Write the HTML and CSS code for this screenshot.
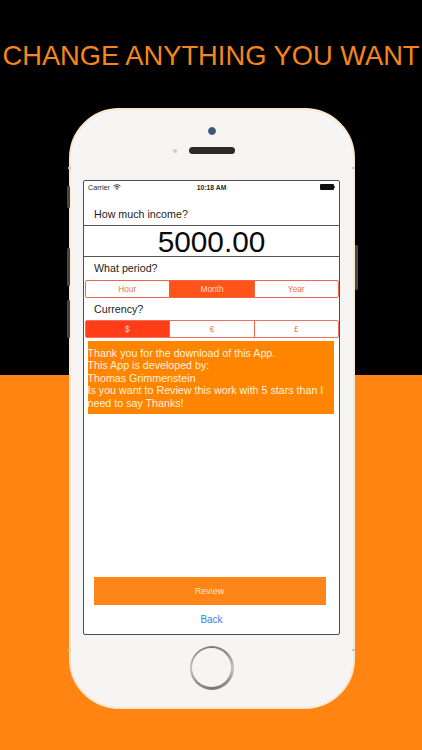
FILE: index.html
```html
<!DOCTYPE html>
<html lang="en">
<head>
<meta charset="utf-8">
<title>Change anything you want</title>
<link rel="stylesheet" href="styles.css">
</head>
<body>
<main class="page">
  <h1 class="headline">CHANGE ANYTHING YOU WANT</h1>
  <div class="phone">
    <span class="side side-mute"></span>
    <span class="side side-up"></span>
    <span class="side side-down"></span>
    <span class="side side-power"></span>
    <span class="band band-tl"></span>
    <span class="band band-tr"></span>
    <span class="band band-bl"></span>
    <span class="band band-br"></span>
    <div class="phone-top">
      <span class="camera"></span>
      <span class="speaker"><span class="sensor"></span></span>
    </div>
    <section class="screen">
      <div class="status">
        <div class="status-left">
          <span>Carrier</span>
          <svg class="wifi" viewBox="0 0 12 9" width="8" height="6" aria-hidden="true">
            <path d="M.8 3.2a7.4 7.4 0 0 1 10.4 0M2.5 5a5 5 0 0 1 7 0M4.2 6.7a2.6 2.6 0 0 1 3.6 0" fill="none" stroke="#222" stroke-width="1.3"/>
            <path d="M6 9 4.9 7.8a1.6 1.6 0 0 1 2.2 0z" fill="#222"/>
          </svg>
        </div>
        <span class="time">10:18 AM</span>
        <div class="status-right"><span class="battery"></span><span class="battery-tip"></span></div>
      </div>
      <div class="q q-first">How much income?</div>
      <div class="amount">5000.00</div>
      <div class="q q-period">What period?</div>
      <div class="seg seg-period">
        <span class="seg-item">Hour</span>
        <span class="seg-item seg-on">Month</span>
        <span class="seg-item">Year</span>
      </div>
      <div class="q q-currency">Currency?</div>
      <div class="seg seg-currency">
        <span class="seg-item seg-on">$</span>
        <span class="seg-item">€</span>
        <span class="seg-item">£</span>
      </div>
      <div class="thanks">Thank you for the download of this App.<br>This App is developed by:<br>Thomas Grimmenstein<br>Is you want to Review this work with 5 stars than I need to say Thanks!</div>
      <div class="review">Review</div>
      <div class="back">Back</div>
    </section>
    <div class="phone-bottom"><span class="home"></span></div>
  </div>
</main>
</body>
</html>
```

FILE: styles.css
```css
* { box-sizing: border-box; }
html, body { margin: 0; padding: 0; }
body { font-family: "Liberation Sans", Arial, sans-serif; }
.page {
  width: 422px;
  height: 750px;
  overflow: hidden;
  padding-top: 40px;
  background: linear-gradient(#000 0 375px, #ff8411 375px);
}
.headline {
  margin: 0;
  height: 34px;
  font-size: 27.3px;
  line-height: 32px;
  font-weight: 400;
  color: #f5851c;
  text-align: center;
  white-space: nowrap;
}
.phone {
  position: relative;
  width: 286px;
  height: 601px;
  margin: 34px 0 0 68.5px;
  padding: 0 12.5px;
  background: #f6f5f3;
  border: 2.5px solid #fbe6cf;
  border-radius: 50px;
}
.side { position: absolute; background: #4a4644; border-radius: 1px; width: 3px; }
.side-mute { left: -4px; top: 76px; height: 22px; }
.side-up { left: -4px; top: 138px; height: 38px; }
.side-down { left: -4px; top: 190px; height: 38px; }
.side-power { right: -5px; top: 135px; height: 45px; }
.band { position: absolute; width: 3px; height: 2px; background: #c9c5c0; }
.band-tl { left: -2.5px; top: 57px; }
.band-tr { right: -2.5px; top: 57px; }
.band-bl { left: -2.5px; top: 539px; }
.band-br { right: -2.5px; top: 539px; }
.phone-top {
  height: 69.5px;
  display: flex;
  flex-direction: column;
  align-items: center;
  padding-top: 17px;
}
.camera {
  width: 8px;
  height: 8px;
  border-radius: 50%;
  background: #2f5a82;
  border: 1.5px solid #5b6470;
}
.speaker {
  position: relative;
  width: 46px;
  height: 7px;
  margin-top: 12px;
  border-radius: 4px;
  background: #2a2a2a;
}
.sensor {
  position: absolute;
  left: -16px;
  top: 1.5px;
  width: 4px;
  height: 4px;
  border-radius: 50%;
  background: #cfcdca;
}
.screen {
  width: 257px;
  height: 455px;
  display: flex;
  flex-direction: column;
  background: #fff;
  border: 1.5px solid #4f4f4f;
  border-radius: 2px;
  color: #1c1c1c;
}
.status {
  height: 13px;
  flex: none;
  display: grid;
  grid-template-columns: 1fr auto 1fr;
  align-items: center;
  padding: 0 4px;
  font-size: 7.2px;
  color: #2a2a2a;
}
.status-left { display: flex; align-items: center; gap: 3px; }
.time { font-weight: 700; font-size: 6.8px; }
.status-right { display: flex; align-items: center; justify-content: flex-end; }
.battery { width: 14px; height: 5.5px; background: #111; border-radius: 1px; }
.battery-tip { width: 1px; height: 2.5px; background: #555; }
.q {
  flex: none;
  padding-left: 10px;
  font-size: 10.7px;
  line-height: 14px;
}
.q-first { height: 31px; padding-top: 13px; }
.amount {
  flex: none;
  height: 32px;
  margin: 0 -0.5px;
  border-top: 1px solid #555;
  border-bottom: 1px solid #555;
  text-align: center;
  font-size: 29.8px;
  line-height: 31px;
  color: #0a0a0a;
}
.q-period { height: 23px; padding-top: 4.5px; }
.seg {
  flex: none;
  display: grid;
  grid-template-columns: 83.5px 85px 1fr;
  height: 18px;
  margin: 0 0.5px;
  border: 1px solid #f0654a;
  border-radius: 2px;
  font-size: 8.3px;
  color: #f4704c;
}
.seg-item {
  display: flex;
  align-items: center;
  justify-content: center;
  border-left: 1px solid #f0654a;
}
.seg-item:first-child { border-left: 0; }
.seg-period .seg-on { background: #ff5419; border-color: #ff5419; color: #ffd9c8; }
.seg-currency { border-color: #ec7160; }
.seg-currency .seg-on { background: #ff3d17; color: #ffd9c8; }
.q-currency { height: 22px; padding-top: 4.5px; }
.thanks {
  flex: none;
  width: 246px;
  height: 73px;
  margin: 3.5px 0 0 3.5px;
  padding-top: 5.5px;
  background: #ff8500;
  color: #fdf0df;
  font-size: 10.7px;
  line-height: 12.5px;
}
.review {
  flex: none;
  width: 232px;
  height: 28px;
  margin: auto 0 0 9.5px;
  background: #ff8519;
  color: #fde3c8;
  font-size: 9px;
  display: flex;
  align-items: center;
  justify-content: center;
}
.back {
  flex: none;
  height: 29px;
  display: flex;
  align-items: center;
  justify-content: center;
  color: #3584e2;
  font-size: 10px;
}
.phone-bottom {
  display: flex;
  justify-content: center;
  padding-top: 11px;
}
.home {
  position: relative;
  width: 44px;
  height: 44px;
  border-radius: 50%;
  background: conic-gradient(#7a7a7a, #8f8f8f 45deg, #c4c4c4 90deg, #8f8f8f 135deg, #777 180deg, #8f8f8f 225deg, #c4c4c4 270deg, #8f8f8f 315deg, #7a7a7a);
}
.home::after {
  content: "";
  position: absolute;
  inset: 2.5px;
  border-radius: 50%;
  background: #f6f5f3;
}
```
